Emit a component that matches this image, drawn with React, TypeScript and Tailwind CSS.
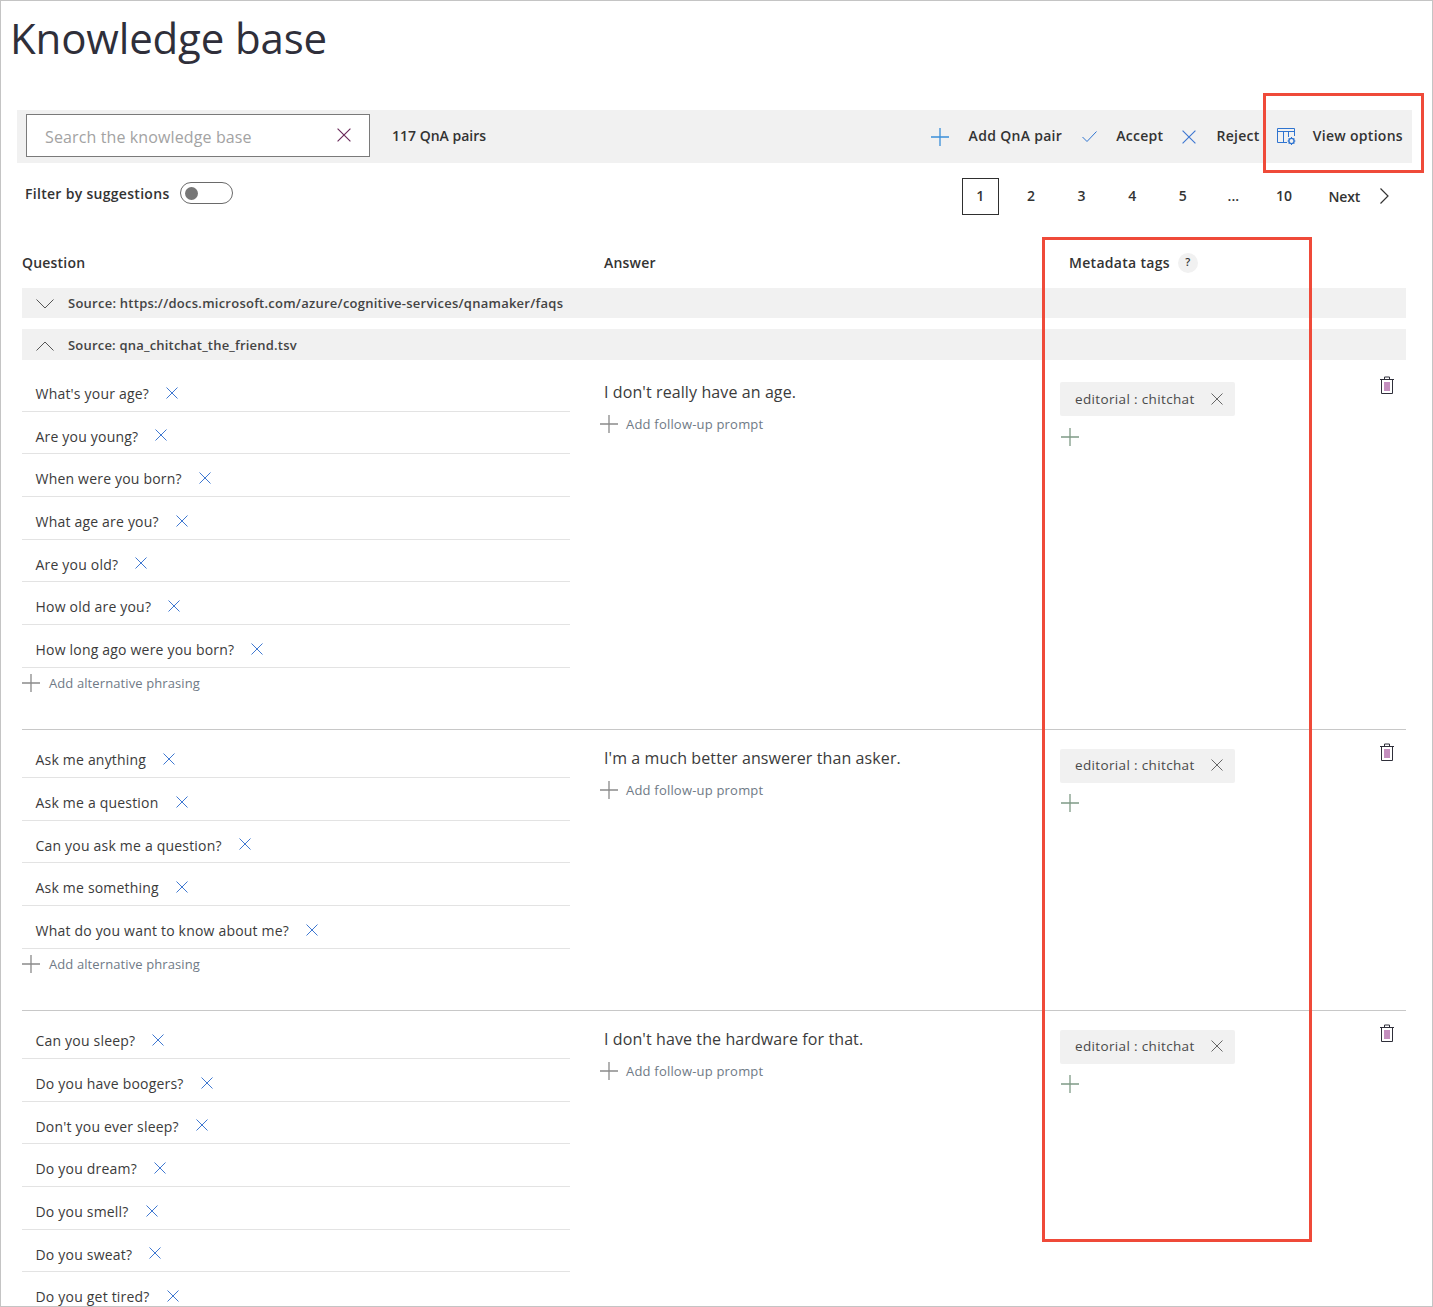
import type { ReactNode } from "react";

function Cross({ size = 12, className = "" }: { size?: number; className?: string }) {
  return (
    <svg width={size} height={size} viewBox="0 0 12 12" className={`shrink-0 ${className}`} fill="none" stroke="currentColor" strokeWidth={1}>
      <path d="M0.5 0.5L11.5 11.5M11.5 0.5L0.5 11.5" />
    </svg>
  );
}

function Plus({ size = 18, className = "" }: { size?: number; className?: string }) {
  return (
    <svg width={size} height={size} viewBox="0 0 18 18" className={`shrink-0 ${className}`} fill="none" stroke="currentColor" strokeWidth={1.3}>
      <path d="M9 0V18M0 9H18" />
    </svg>
  );
}

function Chevron({ up = false }: { up?: boolean }) {
  return (
    <svg width={18} height={10} viewBox="0 0 18 10" className="shrink-0 text-[#555]" fill="none" stroke="currentColor" strokeWidth={1}>
      <path d={up ? "M0.5 9.5L9 1L17.5 9.5" : "M0.5 0.5L9 9L17.5 0.5"} />
    </svg>
  );
}

function Trash() {
  return (
    <svg width={14} height={18} viewBox="0 0 14 18" fill="none" strokeWidth={1}>
      <path d="M0 3.5H14M4.5 3.5V1H9.5V3.5M1.5 3.5V17.5H12.5V3.5" stroke="#2f2f3a" />
      <path d="M5 6V15M7 6V15M9 6V15" stroke="#8a1f7e" />
    </svg>
  );
}

function ViewOptionsIcon() {
  return (
    <svg width={19} height={17} viewBox="0 0 19 17" className="shrink-0" fill="none">
      <path d="M0.5 14.5V0.5H17.5V8M0.5 14.5H10M0.5 3.5H17.5M6.5 3.5V14.5M11.5 3.5V9" stroke="#2f74d0" />
      <circle cx="14.5" cy="13" r="2.6" stroke="#2f74d0" strokeWidth={1.4} />
      <path d="M14.5 9V10.2M14.5 15.8V17M10.6 13H11.8M17.2 13H18.4M11.8 10.3L12.6 11.1M16.4 14.9L17.2 15.7M17.2 10.3L16.4 11.1M12.6 14.9L11.8 15.7" stroke="#2f74d0" />
    </svg>
  );
}

function Action({ icon, label, iconBox }: { icon: ReactNode; label: string; iconBox: string }) {
  return (
    <div className="flex items-center">
      <span className={`flex items-center justify-center ${iconBox}`}>{icon}</span>
      <span className="pb-[2px] text-[14px] font-semibold tracking-[0.3px] text-[#333]">{label}</span>
    </div>
  );
}

function Question({ text }: { text: string }) {
  return (
    <div className="flex h-[42.67px] items-center gap-[17px] border-b border-[#e3e3e3] pl-[13.5px] pt-[7.67px] text-[14px] tracking-[0.2px] text-[#3b3b3b]">
      <span>{text}</span>
      <Cross className="mb-[2px] text-[#3f78d1]" />
    </div>
  );
}

function Group({ questions, answer, first = false, last = false, height = "" }: { questions: string[]; answer: string; first?: boolean; last?: boolean; height?: string }) {
  return (
    <div className={`grid grid-cols-[582px_456px_1fr] ${height} ${last ? "" : "border-b border-[#c8c8c8]"} ${first ? "pt-[4px]" : ""}`}>
      <div className={`w-[548px] ${first ? "pt-[5px]" : "pt-[5.33px]"}`}>
        {questions.map((q) => (
          <Question key={q} text={q} />
        ))}
        {!last && (
          <div className="flex h-[61px] items-start gap-[9px] pt-[6px] text-[#8a8a8a]">
            <Plus />
            <span className="text-[13px] leading-[18px] tracking-[0.1px] text-[#6f7a86]">Add alternative phrasing</span>
          </div>
        )}
      </div>
      <div className="pt-[16px]">
        <p className="text-[16px] leading-[24px] tracking-[0.1px] text-[#3b3b3b]">{answer}</p>
        <div className="-ml-[4px] mt-[11px] flex items-center gap-[8px] text-[#8a8a8a]">
          <Plus />
          <span className="text-[13px] leading-[18px] tracking-[0.2px] text-[#6f7a86]">Add follow-up prompt</span>
        </div>
      </div>
      <div className={`flex justify-between pt-[13px] ${first ? "-mt-[1px]" : ""}`}>
        <div className="pt-[6px]">
          <div className="flex h-[34px] w-[175px] items-center justify-between rounded-[2px] bg-[#f1f1f1] pl-[15px] pr-[12px] text-[13.5px] tracking-[0.35px] text-[#4a4a4a]">
            <span className={first ? "" : "pb-[2px]"}>editorial : chitchat</span>
            <Cross className={`text-[#666] ${first ? "" : "mb-[2px]"}`} />
          </div>
          <Plus className={`ml-[1px] text-[#7f9a86] ${first ? "mt-[12px]" : "mt-[11px]"}`} />
        </div>
        <div className="mr-[12px]">
          <Trash />
        </div>
      </div>
    </div>
  );
}

const pages = ["1", "2", "3", "4", "5", "...", "10"];

const groups = [
  {
    height: "h-[370px]",
    answer: "I don't really have an age.",
    questions: [
      "What's your age?",
      "Are you young?",
      "When were you born?",
      "What age are you?",
      "Are you old?",
      "How old are you?",
      "How long ago were you born?",
    ],
  },
  {
    height: "h-[281px]",
    answer: "I'm a much better answerer than asker.",
    questions: [
      "Ask me anything",
      "Ask me a question",
      "Can you ask me a question?",
      "Ask me something",
      "What do you want to know about me?",
    ],
  },
  {
    height: "",
    answer: "I don't have the hardware for that.",
    questions: [
      "Can you sleep?",
      "Do you have boogers?",
      "Don't you ever sleep?",
      "Do you dream?",
      "Do you smell?",
      "Do you sweat?",
      "Do you get tired?",
    ],
  },
];

export default function App() {
  return (
    <div className="relative h-[1307px] w-[1433px] overflow-hidden border border-[#c4c4c4] bg-white font-['Open_Sans',sans-serif]">
      <h1 className="ml-[9px] h-[109px] pt-[7px] text-[42px] font-normal leading-[60px] tracking-[-0.15px] text-[#2f2f3a]">Knowledge base</h1>

      {/* Toolbar */}
      <div className="ml-[16px] flex h-[53px] w-[1395px] items-center bg-[#f1f1f1]">
        <div className="mb-[2px] ml-[9px] flex h-[43px] w-[344px] items-center justify-between border border-[#7a7a7a] bg-white px-[18px] pt-[2px]">
          <span className="text-[16px] tracking-[0.12px] text-[#a3a3a3]">Search the knowledge base</span>
          <Cross size={14} className="mb-[4px] text-[#6a2a5a]" />
        </div>
        <span className="ml-[22px] pb-[2px] text-[14px] font-semibold text-[#333]">117 QnA pairs</span>
        <div className="ml-auto flex items-center pr-[9px]">
          <Action icon={<Plus className="text-[#3a8fd9]" />} label="Add QnA pair" iconBox="w-[38px] justify-start" />
          <Action icon={<svg width={15} height={11} viewBox="0 0 15 11" fill="none" stroke="#2f74d0"><path d="M0.5 6L5 10.5L14.5 0.5" /></svg>} label="Accept" iconBox="ml-[20px] w-[34px] justify-start" />
          <Action icon={<Cross size={14} className="text-[#3f78d1]" />} label="Reject" iconBox="ml-[19px] w-[34px] justify-start" />
          <Action icon={<ViewOptionsIcon />} label="View options" iconBox="ml-[17px] w-[36px] justify-start" />
        </div>
      </div>

      {/* Filter and pagination */}
      <div className="flex h-[74px] items-start">
        <div className="ml-[24px] mt-[19px] flex items-center gap-[10px]">
          <span className="text-[14px] font-semibold tracking-[0.3px] text-[#333]">Filter by suggestions</span>
          <span className="flex h-[22px] w-[53px] items-center rounded-full border border-[#6a6a6a] pl-[4px]">
            <span className="h-[13px] w-[13px] rounded-full bg-[#767676]" />
          </span>
        </div>
        <div className="ml-auto mr-[43px] mt-[15px] flex items-center">
          {pages.map((p, i) => (
            <span
              key={p}
              className={`mr-[13.6px] flex h-[37px] w-[37px] items-center justify-center pb-[2px] text-[14px] font-semibold text-[#333] ${i === 0 ? "border border-[#2f2f2f]" : ""}`}
            >
              {p}
            </span>
          ))}
          <span className="ml-[12.5px] text-[14px] font-semibold tracking-[-0.2px] text-[#333]">Next</span>
          <svg width={9} height={16} viewBox="0 0 9 16" className="mb-[2px] ml-[20px]" fill="none" stroke="#333" strokeWidth={1.2}>
            <path d="M0.5 0.5L8 8L0.5 15.5" />
          </svg>
        </div>
      </div>

      {/* Table */}
      <div className="ml-[21px] w-[1384px]">
        <div className="grid h-[51px] grid-cols-[582px_465px_1fr] items-center text-[14px] font-semibold tracking-[0.2px] text-[#333]">
          <span>Question</span>
          <span>Answer</span>
          <span className="flex items-center gap-[8px] tracking-[0.3px]">
            Metadata tags
            <span className="flex h-[20px] w-[20px] items-center justify-center rounded-full bg-[#f1f1f1] text-[11px]">?</span>
          </span>
        </div>
        <div className="flex h-[30px] items-center gap-[14px] bg-[#f1f1f1] pl-[14px] pt-[1px] text-[13px] font-semibold tracking-[0.25px] text-[#444]">
          <Chevron />
          <span>Source: https://docs.microsoft.com/azure/cognitive-services/qnamaker/faqs</span>
        </div>
        <div className="mt-[11px] flex h-[31px] items-center gap-[14px] bg-[#f1f1f1] pl-[14px] pt-[2px] text-[13px] font-semibold tracking-[0.2px] text-[#444]">
          <Chevron up />
          <span>Source: qna_chitchat_the_friend.tsv</span>
        </div>
        {groups.map((g, i) => (
          <Group key={g.answer} questions={g.questions} answer={g.answer} height={g.height} first={i === 0} last={i === 2} />
        ))}
      </div>

      {/* Red callouts */}
      <div className="absolute left-[1262px] top-[92px] h-[80px] w-[161px] border-[3px] border-[#ef4a39]" />
      <div className="absolute left-[1041px] top-[236px] h-[1005px] w-[270px] border-[3px] border-[#ef4a39]" />
    </div>
  );
}
